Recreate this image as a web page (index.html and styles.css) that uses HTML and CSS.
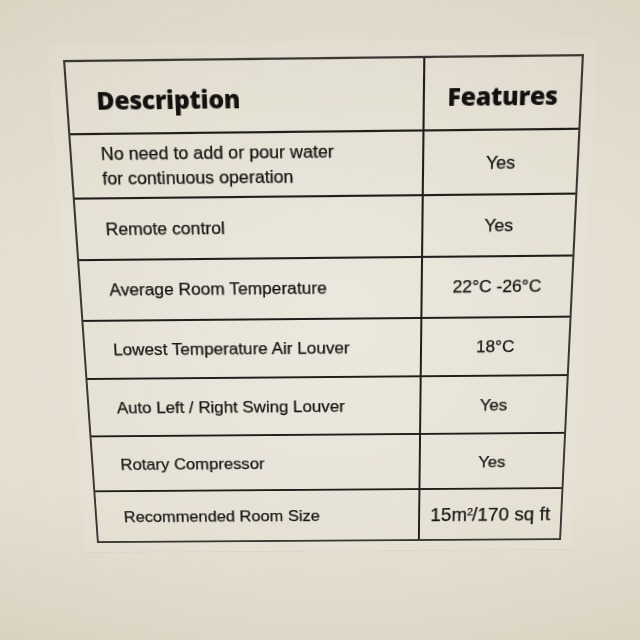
FILE: index.html
```html
<!DOCTYPE html>
<html lang="en">
<head>
<meta charset="utf-8">
<title>Specification label</title>
<link rel="stylesheet" href="styles.css">
</head>
<body>
<div class="photo">
  <div class="spec">
    <div class="cell desc head">Description</div>
    <div class="cell feat head">Features</div>

    <div class="cell desc">No need to add or pour water<br>for continuous operation</div>
    <div class="cell feat">Yes</div>

    <div class="cell desc">Remote control</div>
    <div class="cell feat">Yes</div>

    <div class="cell desc">Average Room Temperature</div>
    <div class="cell feat">22°C -26°C</div>

    <div class="cell desc">Lowest Temperature Air Louver</div>
    <div class="cell feat">18°C</div>

    <div class="cell desc">Auto Left / Right Swing Louver</div>
    <div class="cell feat">Yes</div>

    <div class="cell desc">Rotary Compressor</div>
    <div class="cell feat">Yes</div>

    <div class="cell desc last">Recommended Room Size</div>
    <div class="cell feat last big">15m<sup>2</sup>/170 sq ft</div>
  </div>
</div>
</body>
</html>
```

FILE: styles.css
```css
html, body {
  margin: 0;
  padding: 0;
}

.photo {
  width: 640px;
  height: 640px;
  overflow: hidden;
  background:
    radial-gradient(ellipse 75% 70% at 52% 50%, rgba(236, 233, 224, 0.85) 0%, rgba(233, 229, 218, 0.5) 50%, rgba(233, 229, 218, 0) 100%),
    linear-gradient(180deg, #dbd4c3 0%, #e2dccd 40%, #e3ddce 75%, #dad2c0 100%);
}

.spec {
  position: relative;
  box-sizing: border-box;
  width: 488px;
  height: 481px;
  border: 2px solid #1f1e1b;
  display: grid;
  grid-template-columns: 338.4px 1fr;
  grid-template-rows: 65.5px 60.5px 58.5px 60.3px 58.9px 60.6px 59.1px 1fr;
  transform-origin: 0 0;
  transform: matrix3d(1.061141, -0.012894, 0, -0.0000110988,
                      0.095405, 1.142534, 0, 0.000254838,
                      0, 0, 1, 0,
                      63, 60, 0, 1);
  font-family: "Liberation Sans", Arial, sans-serif;
  font-size: 17.2px;
  line-height: 1.3;
  color: #141311;
  -webkit-text-stroke: 0.25px #141311;
}

.spec::before {
  content: "";
  position: absolute;
  top: -16px;
  left: -16px;
  right: -14px;
  bottom: -13px;
  z-index: -1;
  background: rgba(238, 235, 227, 0.12);
  border-bottom: 1px solid rgba(200, 192, 175, 0.25);
}

.cell {
  display: flex;
  align-items: center;
  border-bottom: 2px solid #1f1e1b;
}

.cell.last {
  border-bottom: none;
}

.desc {
  padding-left: 28px;
  border-right: 2px solid #1f1e1b;
}

.feat {
  justify-content: center;
  text-align: center;
}

.head {
  font-family: "Open Sans", "Liberation Sans", sans-serif;
  font-weight: 800;
  font-size: 23.5px;
  letter-spacing: -0.3px;
  padding-top: 6px;
  color: #121110;
  -webkit-text-stroke: 0;
}

.desc.head {
  padding-left: 27px;
}

.big {
  font-size: 19.5px;
  letter-spacing: 0.1px;
}

.big sup {
  font-size: 11px;
  line-height: 0;
  position: relative;
  top: -3px;
  margin-right: -1px;
}
```
